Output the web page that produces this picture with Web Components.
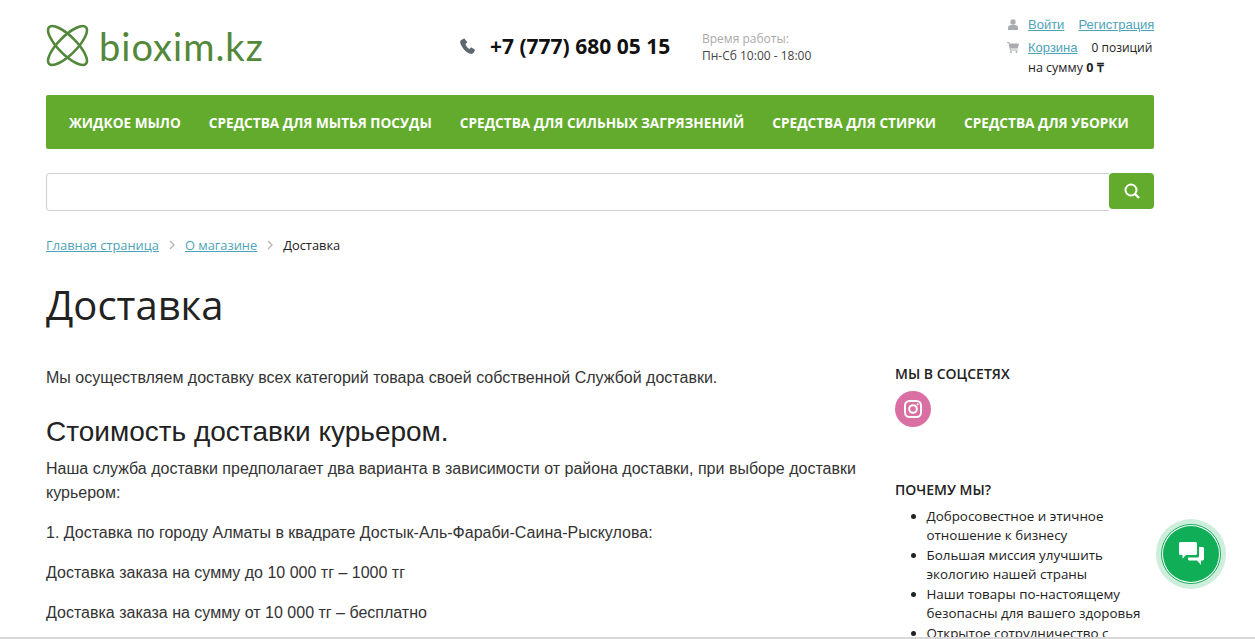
<!DOCTYPE html>
<html lang="ru">
<head>
<meta charset="utf-8">
<title>Доставка</title>
<style>
  html, body { margin: 0; height: 639px; overflow: hidden; background: #fff; }
  body { font-family: "Open Sans", sans-serif; color: #222; }
</style>
</head>
<body>
<site-page>
  <site-header></site-header>
  <main-nav></main-nav>
  <search-bar></search-bar>
  <bread-crumbs></bread-crumbs>
  <h1>Доставка</h1>
  <delivery-article slot="main"></delivery-article>
  <side-bar slot="side"></side-bar>
</site-page>
<chat-button></chat-button>

<script>
  (function (customElements) {
    function define(name, html) {
      customElements.define(name, class extends HTMLElement {
        constructor() {
          super();
          this.attachShadow({mode: 'open'}).innerHTML = html;
        }
      });
    }

    define('site-page', `
      <style>
        :host { display: block; height: 637px; overflow: hidden; border-bottom: 2px solid #d8d8d8; }
        .wrap { width: 1108px; margin-left: 46px; }
        ::slotted(h1) { margin: 0; padding-top: 24px; font: 400 40px/54px "Open Sans", sans-serif; color: #222; }
        .cols { display: flex; margin-top: 34px; }
        .main { width: 849px; flex: none; }
      </style>
      <div class="wrap">
        <slot></slot>
        <div class="cols"><div class="main"><slot name="main"></slot></div><slot name="side"></slot></div>
      </div>
    `);

    define('site-header', `
      <style>
        :host { display: flex; height: 95px; font-size: 12px; color: #222; }
        a { color: #4ea3b8; text-decoration: underline; font: 13px "Liberation Sans", sans-serif; }
        .logo { width: 414px; flex: none; display: flex; align-items: center; gap: 10px; height: 91px; }
        .logo span { font: 400 38px/1 Lato, sans-serif; color: #53873a; letter-spacing: 1px; }
        .phone { width: 242px; flex: none; display: flex; align-items: center; height: 92px; }
        .phone b { font-size: 21px; font-weight: 700; color: #111; margin-left: 14px; white-space: nowrap; }
        .hours { width: 305px; flex: none; padding-top: 30px; line-height: 17px; font-size: 12px; color: #444; }
        .hours div:first-child { color: #aaa; }
        .user { padding-top: 13px; font: 12px/21px "Open Sans", sans-serif; color: #222; }
        .row { display: flex; align-items: center; height: 22px; white-space: nowrap; }
        .row + .row { margin-top: 1px; }
        .ic { width: 21px; flex: none; display: flex; }
        .gap { margin-left: 14px; }
        .sum { padding-left: 21px; height: 19px; line-height: 19px; font-size: 12.5px; }
      </style>
      <div class="logo">
        <svg width="43" height="43" viewBox="0 0 43 43" fill="none" stroke="#53873a" stroke-width="2.6">
          <ellipse cx="21.5" cy="21.5" rx="9" ry="26" transform="rotate(45 21.5 21.5)"/>
          <ellipse cx="21.5" cy="21.5" rx="9" ry="26" transform="rotate(-45 21.5 21.5)"/>
        </svg>
        <span>bioxim.kz</span>
      </div>
      <div class="phone">
        <svg width="16" height="16" viewBox="0 0 16 16"><path fill="#5d6770" d="M3.6.7 1.2 2C.3 2.600 0 3.600.3 5c.9 3.700 5.700 9.800 10 10.800 1.300.3 2.300 0 3-.9l1.500-2.100c.3-.4.2-.9-.2-1.200l-2.700-1.900c-.4-.3-.9-.2-1.200.1l-1 1.200c-2-.8-3.700-3-4.300-5.100l1.300-.8c.4-.3.600-.8.400-1.200L4.800 1C4.600.6 4 .4 3.600.7z"/></svg>
        <b>+7 (777) 680 05 15</b>
      </div>
      <div class="hours"><div>Время работы:</div><div>Пн-Сб 10:00 - 18:00</div></div>
      <div class="user">
        <div class="row">
          <span class="ic"><svg style="margin-left:1px" width="10" height="11" viewBox="0 0 10 11"><circle cx="5" cy="3" r="2.700" fill="#a9adb2"/><path fill="#a9adb2" d="M0 11V8.500C0 7 1.500 6.300 3 6h4c1.500.3 3 1 3 2.500V11z"/></svg></span>
          <a href="#">Войти</a><a class="gap" href="#">Регистрация</a>
        </div>
        <div class="row">
          <span class="ic"><svg width="12" height="11" viewBox="0 0 12 11"><path fill="#a9adb2" d="M0 0h2.200l.4 1.500H12l-1.200 5H3.500l.2 1h7v1H3L1.500 1H0z"/><circle cx="4" cy="10" r="1" fill="#a9adb2"/><circle cx="9.500" cy="10" r="1" fill="#a9adb2"/></svg></span>
          <a href="#">Корзина</a><span style="margin-left:14px">0 позиций</span>
        </div>
        <div class="sum">на сумму <b>0 ₸</b></div>
      </div>
    `);

    define('main-nav', `
      <style>
        :host { display: flex; height: 54px; background: #62ab2c; border-radius: 2px; padding-left: 23px; gap: 28px; align-items: center; }
        a { color: #fff; font: 700 13.63px "Open Sans", sans-serif; text-decoration: none; white-space: nowrap; text-transform: uppercase; }
      </style>
      <a href="#">Жидкое мыло</a>
      <a href="#">Средства для мытья посуды</a>
      <a href="#">Средства для сильных загрязнений</a>
      <a href="#">Средства для стирки</a>
      <a href="#">Средства для уборки</a>
    `);

    define('search-bar', `
      <style>
        :host { display: flex; margin-top: 24px; height: 38px; }
        input { flex: 1; min-width: 0; box-sizing: border-box; height: 38px; border: 1px solid #ccd0d3; border-right: 0; border-radius: 4px 0 0 4px; outline: none; }
        button { width: 45px; height: 36px; border: 0; padding: 0; background: #62ab2c; border-radius: 4px; display: flex; align-items: center; justify-content: center; }
      </style>
      <input type="text" aria-label="Поиск">
      <button aria-label="Найти"><svg width="16" height="16" viewBox="0 0 16 16" fill="none" stroke="#fff"><circle cx="7" cy="7" r="5.500" stroke-width="2"/><path d="m11 11 4 4" stroke-width="2.400"/></svg></button>
    `);

    define('bread-crumbs', `
      <style>
        :host { display: flex; align-items: center; margin-top: 25px; height: 18px; font-size: 12.85px; color: #222; white-space: nowrap; }
        a { color: #4ea3b8; }
        svg { margin: 0 10px; }
      </style>
      <a href="#">Главная страница</a>
      <svg width="6" height="10" viewBox="0 0 6 10" fill="none" stroke="#b5b5b5" stroke-width="1.300"><path d="m1 1 4 4-4 4"/></svg>
      <a href="#">О магазине</a>
      <svg width="6" height="10" viewBox="0 0 6 10" fill="none" stroke="#b5b5b5" stroke-width="1.300"><path d="m1 1 4 4-4 4"/></svg>
      <span>Доставка</span>
    `);

    define('delivery-article', `
      <style>
        :host { display: block; font: 16px/24px "Liberation Sans", sans-serif; color: #333; }
        p { margin: 0 0 16px; }
        h2 { margin: 0 0 9px; font: 400 28px/32px "Liberation Sans", sans-serif; color: #222; }
      </style>
      <p style="margin-bottom:26px">Мы осуществляем доставку всех категорий товара своей собственной Службой доставки.</p>
      <h2>Стоимость доставки курьером.</h2>
      <p>Наша служба доставки предполагает два варианта в зависимости от района доставки, при выборе доставки курьером:</p>
      <p>1. Доставка по городу Алматы в квадрате Достык-Аль-Фараби-Саина-Рыскулова:</p>
      <p>Доставка заказа на сумму до 10 000 тг – 1000 тг</p>
      <p>Доставка заказа на сумму от 10 000 тг – бесплатно</p>
    `);

    define('side-bar', `
      <style>
        :host { display: block; width: 259px; font-size: 13.4px; color: #222; }
        h3 { margin: 0; font: 600 14px/16px "Open Sans", sans-serif; text-transform: uppercase; color: #222; }
        .ig { display: flex; width: 36px; height: 36px; margin-top: 9px; margin-bottom: 55px; border-radius: 50%; background: #d96fa3; align-items: center; justify-content: center; }
        ul { margin: 8.5px 0 0; padding: 0 0 0 31.5px; line-height: 19.500px; }
      </style>
      <h3>Мы в соцсетях</h3>
      <a class="ig" href="#" aria-label="Instagram"><svg width="20" height="20" viewBox="0 0 20 20" fill="none" stroke="#fff" stroke-width="2"><rect x="2" y="2" width="16" height="16" rx="4.500"/><circle cx="10" cy="10" r="3.800"/><circle cx="14.700" cy="5.300" r=".6" fill="#fff" stroke-width="1"/></svg></a>
      <h3>Почему мы?</h3>
      <ul>
        <li>Добросовестное и этичное отношение к бизнесу</li>
        <li>Большая миссия улучшить экологию нашей страны</li>
        <li>Наши товары по-настоящему безопасны для вашего здоровья</li>
        <li>Открытое сотрудничество с</li>
      </ul>
    `);

    define('chat-button', `
      <style>
        :host { position: fixed; left: 1156px; top: 519px; width: 70px; height: 70px; border-radius: 50%; background: #cdeedb; display: flex; align-items: center; justify-content: center; }
        .out { width: 60px; height: 60px; box-sizing: border-box; border-radius: 50%; background: #fff; border: 1px solid #0fae57; padding: 1px; }
        .in { width: 100%; height: 100%; border-radius: 50%; background: #0fae57; display: flex; align-items: center; justify-content: center; }
      </style>
      <div class="out"><div class="in">
        <svg width="25" height="24" viewBox="0 0 25 24"><path fill="#fff" d="M1.500 0h15c.8 0 1.500.7 1.500 1.500v10c0 .8-.7 1.500-1.500 1.500H7l-3.500 3.700V13h-2C.7 13 0 12.300 0 11.500v-10C0 .7.700 0 1.500 0z"/><path fill="#fff" d="M20 5h3.500c.8 0 1.500.7 1.500 1.500V17c0 .8-.7 1.500-1.500 1.500H22V23l-4-4.500h-7.500c-.8 0-1.500-.7-1.500-1.500v-1.500h9.500c1 0 1.500-.7 1.500-1.500z"/></svg>
      </div></div>
    `);
  })(window.customElements);
</script>
</body>
</html>
